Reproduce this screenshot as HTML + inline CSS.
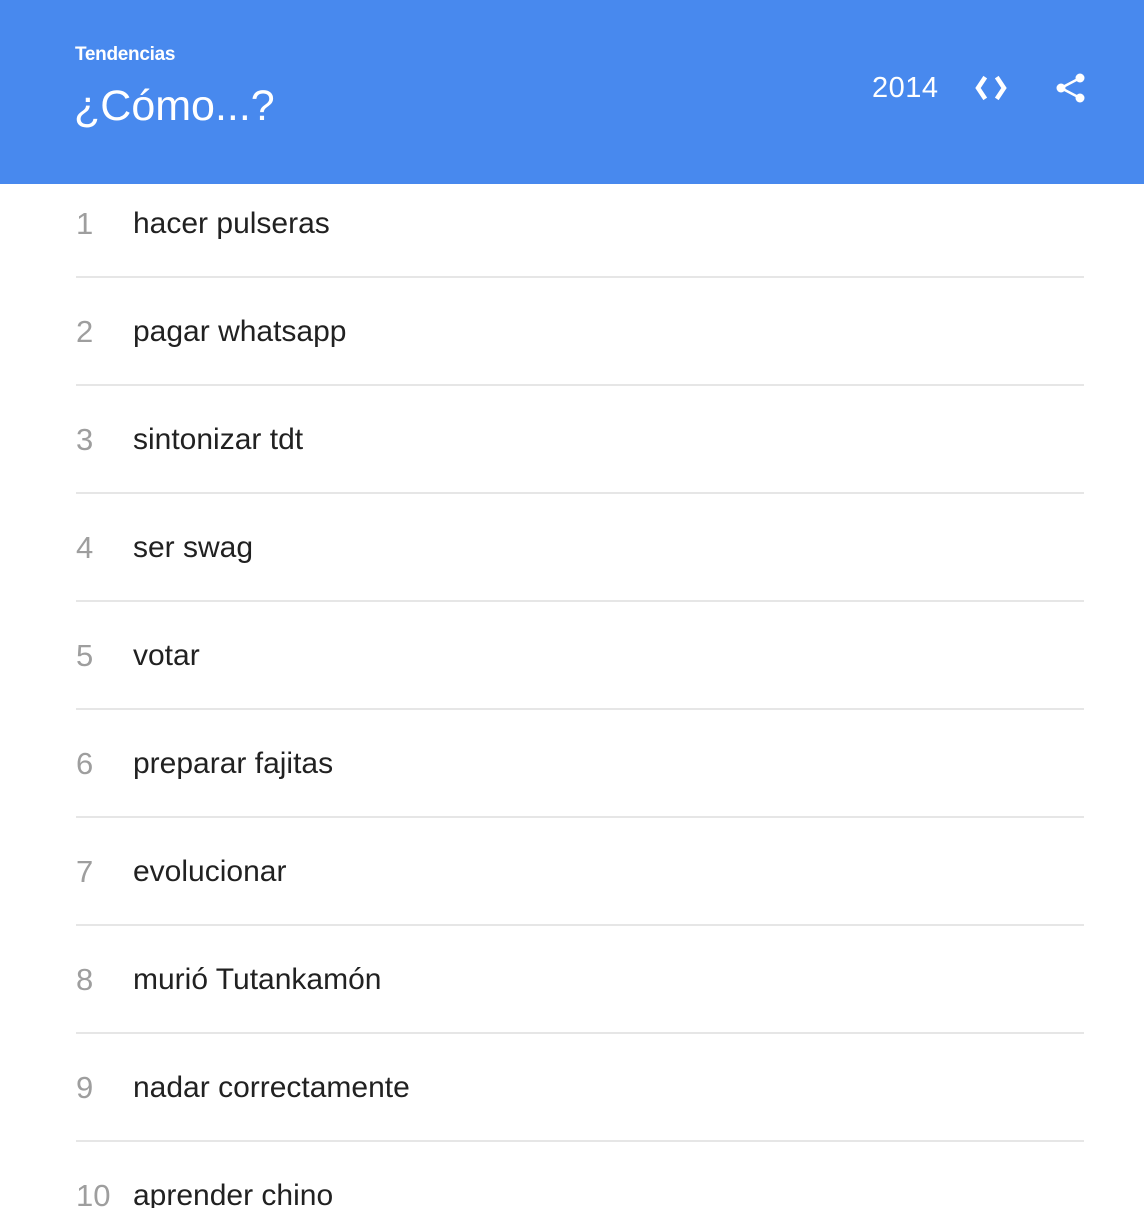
<!DOCTYPE html>
<html><head><meta charset="utf-8"><style>
html,body{margin:0;padding:0;width:1144px;height:1228px;background:#fff;overflow:hidden;font-family:"Liberation Sans",Arial,sans-serif}
.hd{position:absolute;left:0;top:0;width:1144px;height:184px;background:#4889ee;color:#fff}
.t1{position:absolute;left:75px;top:43px;font-size:19px;line-height:24px;font-weight:bold;letter-spacing:-0.3px}
.t2{position:absolute;left:74px;top:81px;font-size:43px;line-height:50px}
.yr{position:absolute;left:872px;top:70px;font-size:29px;line-height:36px;letter-spacing:0.5px}
.list{position:absolute;left:0;top:184px;width:1144px;height:1024px;overflow:hidden}
.row{position:absolute;left:76px;width:1008px;height:94px;border-bottom:2px solid #e6e6e6;box-sizing:border-box}
.n{position:absolute;left:0;top:20px;font-size:31px;line-height:40px;color:#9e9e9e}
.x{position:absolute;left:57px;top:20px;font-size:30px;line-height:40px;color:#212121}
</style></head><body>
<div class="hd">
<div class="t1">Tendencias</div>
<div class="t2">¿Cómo...?</div>
<div class="yr">2014</div>
<svg style="position:absolute;left:974px;top:74px" width="36" height="28" viewBox="0 0 36 28"><path d="M10 5 L4 14 L10 23 M24 5 L30 14 L24 23" stroke="#fff" stroke-width="4.5" fill="none" stroke-linecap="square"/></svg>
<svg style="position:absolute;left:1054px;top:72px" width="32" height="32" viewBox="0 0 32 32"><circle cx="26" cy="6" r="4.5" fill="#fff"/><circle cx="7" cy="16" r="4.5" fill="#fff"/><circle cx="26" cy="26" r="4.5" fill="#fff"/><path d="M26 6 L7 16 L26 26" stroke="#fff" stroke-width="2.5" fill="none"/></svg>
</div>
<div class="list">
<div class="row" style="top:0"><span class="n">1</span><span class="x">hacer pulseras</span></div>
<div class="row" style="top:108px"><span class="n">2</span><span class="x">pagar whatsapp</span></div>
<div class="row" style="top:216px"><span class="n">3</span><span class="x">sintonizar tdt</span></div>
<div class="row" style="top:324px"><span class="n">4</span><span class="x">ser swag</span></div>
<div class="row" style="top:432px"><span class="n">5</span><span class="x">votar</span></div>
<div class="row" style="top:540px"><span class="n">6</span><span class="x">preparar fajitas</span></div>
<div class="row" style="top:648px"><span class="n">7</span><span class="x">evolucionar</span></div>
<div class="row" style="top:756px"><span class="n">8</span><span class="x">murió Tutankamón</span></div>
<div class="row" style="top:864px"><span class="n">9</span><span class="x">nadar correctamente</span></div>
<div class="row" style="top:972px;border-bottom:none;height:60px"><span class="n">10</span><span class="x">aprender chino</span></div>
</div>
</body></html>
